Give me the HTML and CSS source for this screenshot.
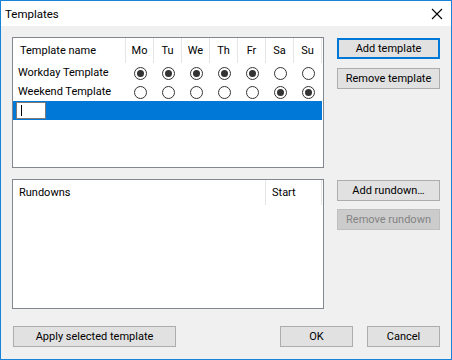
FILE: index.html
```html
<!DOCTYPE html>
<html>
<head>
<meta charset="utf-8">
<link rel="stylesheet" href="styles.css">
</head>
<body>
<div class="window">
  <div class="titlebar">
    <span class="title">Templates</span>
    <svg class="close" width="12" height="12" viewBox="0 0 12 12"><path d="M1 1 L11 11 M11 1 L1 11" stroke="#000" stroke-width="1.1" fill="none"/></svg>
  </div>
  <div class="content">
    <div class="section">
      <div class="listbox lb-templates">
        <div class="lv-row lv-head days">
          <div class="hc name">Template name</div>
          <div class="hc day">Mo</div>
          <div class="hc day">Tu</div>
          <div class="hc day">We</div>
          <div class="hc day">Th</div>
          <div class="hc day">Fr</div>
          <div class="hc day">Sa</div>
          <div class="hc day">Su</div>
        </div>
        <div class="lv-row days item">
          <div class="cell name">Workday Template</div>
          <div class="cell day"><span class="radio on"></span></div>
          <div class="cell day"><span class="radio on"></span></div>
          <div class="cell day"><span class="radio on"></span></div>
          <div class="cell day"><span class="radio on"></span></div>
          <div class="cell day"><span class="radio on"></span></div>
          <div class="cell day"><span class="radio"></span></div>
          <div class="cell day"><span class="radio"></span></div>
        </div>
        <div class="lv-row days item">
          <div class="cell name">Weekend Template</div>
          <div class="cell day"><span class="radio"></span></div>
          <div class="cell day"><span class="radio"></span></div>
          <div class="cell day"><span class="radio"></span></div>
          <div class="cell day"><span class="radio"></span></div>
          <div class="cell day"><span class="radio"></span></div>
          <div class="cell day"><span class="radio on"></span></div>
          <div class="cell day"><span class="radio on"></span></div>
        </div>
        <div class="sel-row">
          <div class="edit"><span class="caret"></span></div>
        </div>
      </div>
      <div class="side">
        <button class="btn default">Add template</button>
        <button class="btn">Remove template</button>
      </div>
    </div>

    <div class="section second">
      <div class="listbox lb-rundowns">
        <div class="lv-row lv-head rundowns">
          <div class="hc rd-name">Rundowns</div>
          <div class="hc rd-start">Start</div>
        </div>
      </div>
      <div class="side side-rd">
        <button class="btn">Add rundown…</button>
        <button class="btn disabled">Remove rundown</button>
      </div>
    </div>

    <div class="footer">
      <button class="btn apply">Apply selected template</button>
      <div class="spacer"></div>
      <button class="btn ok">OK</button>
      <button class="btn cancel">Cancel</button>
    </div>
  </div>
</div>
</body>
</html>
```

FILE: styles.css
```css
* { box-sizing: border-box; }
html, body { margin: 0; padding: 0; background: #f0f0f0; }
body {
  font-family: "Segoe UI", Roboto, "Liberation Sans", sans-serif;
  font-size: 11px;
  color: #000;
}
.window {
  width: 452px;
  height: 360px;
  border: 1px solid #1883d7;
  background: #f0f0f0;
  display: flex;
  flex-direction: column;
}
.titlebar {
  height: 25px;
  background: #fff;
  display: flex;
  align-items: center;
  padding-left: 4px;
  padding-right: 8px;
  flex: none;
}
.title {
  font-size: 11.5px;
  flex: 1;
  padding-top: 1px;
}
.close { display: block; margin-top: 1px; }
.content {
  padding: 11px 11px 0 11px;
  display: flex;
  flex-direction: column;
}
.section {
  display: flex;
  gap: 13px;
}
.second { margin-top: 11px; }
.listbox {
  width: 312px;
  background: #fff;
  border: 1px solid #828790;
}
.lb-templates { height: 131px; }
.lb-rundowns { height: 130px; }
.lv-row {
  display: grid;
  width: 309px;
}
.days { grid-template-columns: 113px repeat(7, 28px); }
.rundowns { grid-template-columns: 253px 56px; }
.lv-head { height: 25px; }
.hc {
  border-right: 1px solid #e5e5e5;
  display: flex;
  align-items: center;
  padding-bottom: 1px;
}
.hc.name { padding-left: 7px; }
.hc.day { justify-content: center; }
.hc.rd-name, .hc.rd-start { padding-left: 6px; }
.item { height: 19px; }
.cell {
  display: flex;
  align-items: center;
}
.cell.name { padding-left: 5px; }
.cell.day { justify-content: center; padding-left: 1px; padding-top: 1px; }
.radio {
  width: 13px;
  height: 13px;
  border: 1px solid #333;
  border-radius: 50%;
  background: #fff;
  display: flex;
  align-items: center;
  justify-content: center;
}
.radio.on::after {
  content: "";
  width: 7px;
  height: 7px;
  border-radius: 50%;
  background: #333;
}
.sel-row {
  width: 309px;
  height: 19px;
  background: #0078d7;
  padding: 1px 0 0 3px;
}
.edit {
  width: 30px;
  height: 17px;
  background: #fff;
  border: 1px solid #7a7a7a;
  padding: 2px 0 0 4px;
}
.caret {
  display: block;
  width: 1px;
  height: 11px;
  background: #000;
}
.side {
  display: flex;
  flex-direction: column;
  gap: 9px;
  padding-top: 1px;
  width: 103px;
}
.side-rd { gap: 8px; }
.btn {
  font-family: inherit;
  font-size: 11px;
  color: #000;
  height: 21px;
  background: #e1e1e1;
  border: 1px solid #adadad;
  padding: 0;
  margin: 0;
  border-radius: 0;
  width: 103px;
  line-height: 18px;
}
.btn.default { border: 2px solid #0078d7; }
.btn.disabled {
  background: #cccccc;
  border-color: #bfbfbf;
  color: #838383;
}
.footer {
  display: flex;
  margin-top: 17px;
  padding-left: 1px;
}
.spacer { flex: 1; }
.apply { width: 163px; }
.ok { width: 73px; margin-right: 14px; }
.cancel { width: 73px; }
```
